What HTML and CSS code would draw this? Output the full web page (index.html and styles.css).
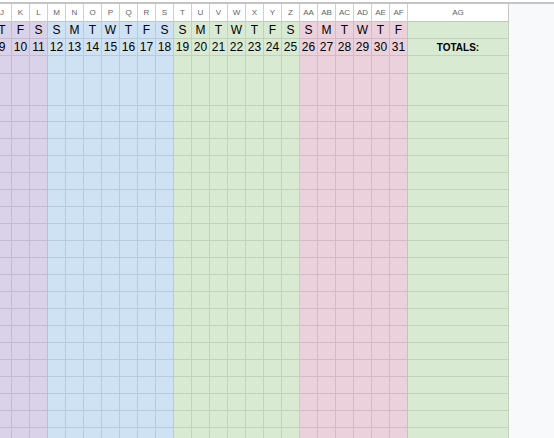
FILE: index.html
```html
<!DOCTYPE html>
<html>
<head>
<meta charset="utf-8">
<link rel="stylesheet" href="styles.css">
</head>
<body>
<div class="sheet">
  <div class="grid">
    <div class="row hdr"><span>J</span><span>K</span><span>L</span><span>M</span><span>N</span><span>O</span><span>P</span><span>Q</span><span>R</span><span>S</span><span>T</span><span>U</span><span>V</span><span>W</span><span>X</span><span>Y</span><span>Z</span><span>AA</span><span>AB</span><span>AC</span><span>AD</span><span>AE</span><span>AF</span><span>AG</span></div>
    <div class="row txt"><span>T</span><span>F</span><span>S</span><span>S</span><span>M</span><span>T</span><span>W</span><span>T</span><span>F</span><span>S</span><span>S</span><span>M</span><span>T</span><span>W</span><span>T</span><span>F</span><span>S</span><span>S</span><span>M</span><span>T</span><span>W</span><span>T</span><span>F</span><span></span></div>
    <div class="row txt"><span>9</span><span>10</span><span>11</span><span>12</span><span>13</span><span>14</span><span>15</span><span>16</span><span>17</span><span>18</span><span>19</span><span>20</span><span>21</span><span>22</span><span>23</span><span>24</span><span>25</span><span>26</span><span>27</span><span>28</span><span>29</span><span>30</span><span>31</span><span class="tot">TOTALS:</span></div>
    <div class="row r18"><span></span><span></span><span></span><span></span><span></span><span></span><span></span><span></span><span></span><span></span><span></span><span></span><span></span><span></span><span></span><span></span><span></span><span></span><span></span><span></span><span></span><span></span><span></span><span></span></div>
    <div class="row tall"><span></span><span></span><span></span><span></span><span></span><span></span><span></span><span></span><span></span><span></span><span></span><span></span><span></span><span></span><span></span><span></span><span></span><span></span><span></span><span></span><span></span><span></span><span></span><span></span></div>
    <div class="row r16"><span></span><span></span><span></span><span></span><span></span><span></span><span></span><span></span><span></span><span></span><span></span><span></span><span></span><span></span><span></span><span></span><span></span><span></span><span></span><span></span><span></span><span></span><span></span><span></span></div>
    <div class="row"><span></span><span></span><span></span><span></span><span></span><span></span><span></span><span></span><span></span><span></span><span></span><span></span><span></span><span></span><span></span><span></span><span></span><span></span><span></span><span></span><span></span><span></span><span></span><span></span></div>
    <div class="row"><span></span><span></span><span></span><span></span><span></span><span></span><span></span><span></span><span></span><span></span><span></span><span></span><span></span><span></span><span></span><span></span><span></span><span></span><span></span><span></span><span></span><span></span><span></span><span></span></div>
    <div class="row"><span></span><span></span><span></span><span></span><span></span><span></span><span></span><span></span><span></span><span></span><span></span><span></span><span></span><span></span><span></span><span></span><span></span><span></span><span></span><span></span><span></span><span></span><span></span><span></span></div>
    <div class="row"><span></span><span></span><span></span><span></span><span></span><span></span><span></span><span></span><span></span><span></span><span></span><span></span><span></span><span></span><span></span><span></span><span></span><span></span><span></span><span></span><span></span><span></span><span></span><span></span></div>
    <div class="row"><span></span><span></span><span></span><span></span><span></span><span></span><span></span><span></span><span></span><span></span><span></span><span></span><span></span><span></span><span></span><span></span><span></span><span></span><span></span><span></span><span></span><span></span><span></span><span></span></div>
    <div class="row"><span></span><span></span><span></span><span></span><span></span><span></span><span></span><span></span><span></span><span></span><span></span><span></span><span></span><span></span><span></span><span></span><span></span><span></span><span></span><span></span><span></span><span></span><span></span><span></span></div>
    <div class="row"><span></span><span></span><span></span><span></span><span></span><span></span><span></span><span></span><span></span><span></span><span></span><span></span><span></span><span></span><span></span><span></span><span></span><span></span><span></span><span></span><span></span><span></span><span></span><span></span></div>
    <div class="row"><span></span><span></span><span></span><span></span><span></span><span></span><span></span><span></span><span></span><span></span><span></span><span></span><span></span><span></span><span></span><span></span><span></span><span></span><span></span><span></span><span></span><span></span><span></span><span></span></div>
    <div class="row"><span></span><span></span><span></span><span></span><span></span><span></span><span></span><span></span><span></span><span></span><span></span><span></span><span></span><span></span><span></span><span></span><span></span><span></span><span></span><span></span><span></span><span></span><span></span><span></span></div>
    <div class="row"><span></span><span></span><span></span><span></span><span></span><span></span><span></span><span></span><span></span><span></span><span></span><span></span><span></span><span></span><span></span><span></span><span></span><span></span><span></span><span></span><span></span><span></span><span></span><span></span></div>
    <div class="row"><span></span><span></span><span></span><span></span><span></span><span></span><span></span><span></span><span></span><span></span><span></span><span></span><span></span><span></span><span></span><span></span><span></span><span></span><span></span><span></span><span></span><span></span><span></span><span></span></div>
    <div class="row"><span></span><span></span><span></span><span></span><span></span><span></span><span></span><span></span><span></span><span></span><span></span><span></span><span></span><span></span><span></span><span></span><span></span><span></span><span></span><span></span><span></span><span></span><span></span><span></span></div>
    <div class="row"><span></span><span></span><span></span><span></span><span></span><span></span><span></span><span></span><span></span><span></span><span></span><span></span><span></span><span></span><span></span><span></span><span></span><span></span><span></span><span></span><span></span><span></span><span></span><span></span></div>
    <div class="row"><span></span><span></span><span></span><span></span><span></span><span></span><span></span><span></span><span></span><span></span><span></span><span></span><span></span><span></span><span></span><span></span><span></span><span></span><span></span><span></span><span></span><span></span><span></span><span></span></div>
    <div class="row"><span></span><span></span><span></span><span></span><span></span><span></span><span></span><span></span><span></span><span></span><span></span><span></span><span></span><span></span><span></span><span></span><span></span><span></span><span></span><span></span><span></span><span></span><span></span><span></span></div>
    <div class="row"><span></span><span></span><span></span><span></span><span></span><span></span><span></span><span></span><span></span><span></span><span></span><span></span><span></span><span></span><span></span><span></span><span></span><span></span><span></span><span></span><span></span><span></span><span></span><span></span></div>
    <div class="row"><span></span><span></span><span></span><span></span><span></span><span></span><span></span><span></span><span></span><span></span><span></span><span></span><span></span><span></span><span></span><span></span><span></span><span></span><span></span><span></span><span></span><span></span><span></span><span></span></div>
    <div class="row"><span></span><span></span><span></span><span></span><span></span><span></span><span></span><span></span><span></span><span></span><span></span><span></span><span></span><span></span><span></span><span></span><span></span><span></span><span></span><span></span><span></span><span></span><span></span><span></span></div>
    <div class="row"><span></span><span></span><span></span><span></span><span></span><span></span><span></span><span></span><span></span><span></span><span></span><span></span><span></span><span></span><span></span><span></span><span></span><span></span><span></span><span></span><span></span><span></span><span></span><span></span></div>
  </div>
  <div class="filler"></div>
</div>
</body>
</html>
```

FILE: styles.css
```css
html, body {
  margin: 0;
  padding: 0;
  background: #ffffff;
  overflow: hidden;
  height: 100%;
}

.sheet {
  margin-top: 2px;
  border-top: 2px solid #c4c4c4;
  display: flex;
  height: calc(100% - 4px);
}

.grid {
  flex: none;
  width: 509px;
  overflow: hidden;
}

.filler {
  flex: 1;
  background: #f8f9fa;
}

.row {
  display: grid;
  grid-template-columns: 19px repeat(22, 18px) 101px;
  height: 17px;
  margin-left: -7px;
}

.row > span {
  box-sizing: border-box;
  border-right: 1px solid rgba(0, 0, 0, 0.1);
  border-bottom: 1px solid rgba(0, 0, 0, 0.1);
  font-family: "Liberation Sans", Arial, sans-serif;
  font-size: 12px;
  color: #000;
  text-align: center;
  white-space: nowrap;
}

.row > span:nth-child(-n+3) { background: #d9d2e9; }
.row > span:nth-child(n+4):nth-child(-n+10) { background: #cfe2f3; }
.row > span:nth-child(n+11):nth-child(-n+17) { background: #d9ead3; }
.row > span:nth-child(n+18):nth-child(-n+23) { background: #ead1dc; }
.row > span:nth-child(24) { background: #d9ead3; }

.row.hdr { height: 18px; }
.row.hdr > span:nth-child(n) {
  background: #ffffff;
  border-right-color: #d0d0d0;
  border-bottom-color: #c4c4c4;
  font-size: 8px;
  line-height: 17px;
  color: #5f6368;
}
.row.hdr > span:nth-child(24) { border-right-color: #c4c4c4; }

.row.txt > span {
  padding-top: 1px;
  line-height: 15px;
}

.row > span.tot {
  font-size: 10px;
  font-weight: bold;
}

.row.r18 { height: 18px; }
.row.tall { height: 32px; }
.row.r16 { height: 16px; }
```
